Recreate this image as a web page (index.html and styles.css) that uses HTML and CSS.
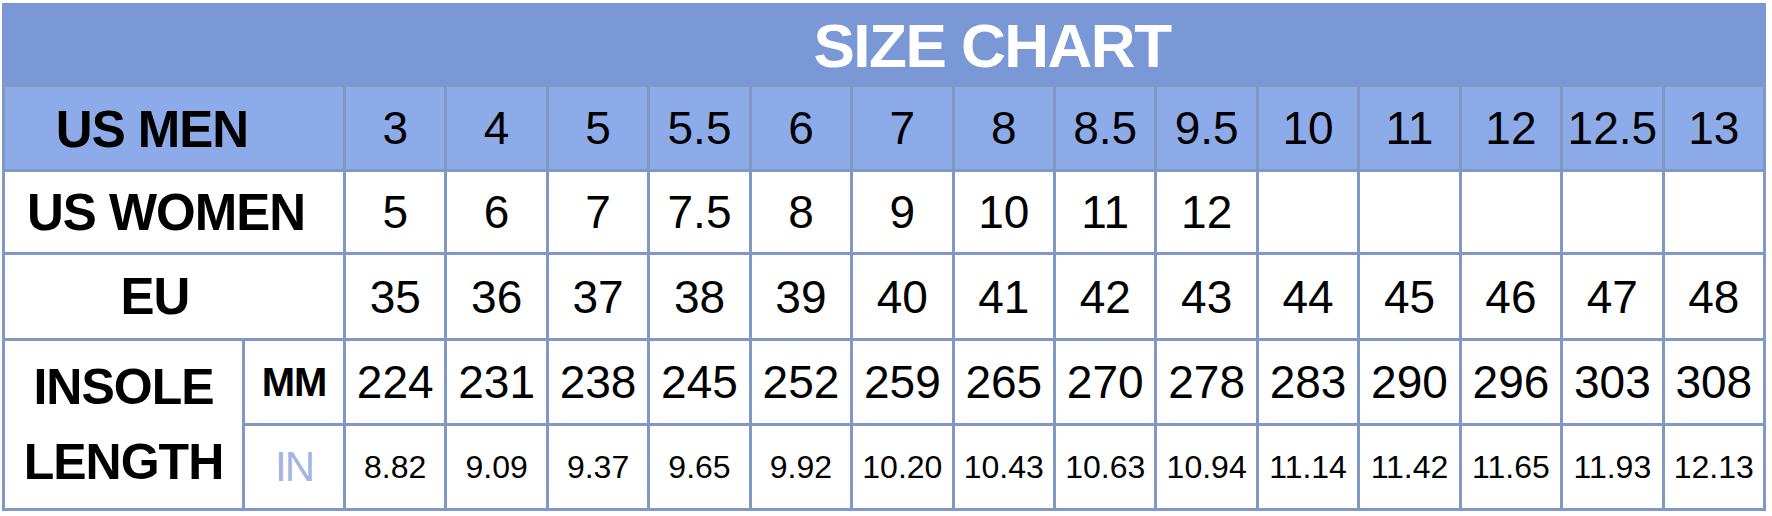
FILE: index.html
```html
<!DOCTYPE html>
<html lang="en">
<head>
<meta charset="utf-8">
<title>Size Chart</title>
<link rel="stylesheet" href="styles.css">
</head>
<body>
<div class="chart">
  <div class="title">SIZE CHART</div>

  <div class="cell label head span2 label-men">US MEN</div>
  <div class="cell num head">3</div>
  <div class="cell num head">4</div>
  <div class="cell num head">5</div>
  <div class="cell num head">5.5</div>
  <div class="cell num head">6</div>
  <div class="cell num head">7</div>
  <div class="cell num head">8</div>
  <div class="cell num head">8.5</div>
  <div class="cell num head">9.5</div>
  <div class="cell num head">10</div>
  <div class="cell num head">11</div>
  <div class="cell num head">12</div>
  <div class="cell num head">12.5</div>
  <div class="cell num head">13</div>

  <div class="cell label span2 label-women">US WOMEN</div>
  <div class="cell num">5</div>
  <div class="cell num">6</div>
  <div class="cell num">7</div>
  <div class="cell num">7.5</div>
  <div class="cell num">8</div>
  <div class="cell num">9</div>
  <div class="cell num">10</div>
  <div class="cell num">11</div>
  <div class="cell num">12</div>
  <div class="cell num"></div>
  <div class="cell num"></div>
  <div class="cell num"></div>
  <div class="cell num"></div>
  <div class="cell num"></div>

  <div class="cell label span2 label-eu">EU</div>
  <div class="cell num">35</div>
  <div class="cell num">36</div>
  <div class="cell num">37</div>
  <div class="cell num">38</div>
  <div class="cell num">39</div>
  <div class="cell num">40</div>
  <div class="cell num">41</div>
  <div class="cell num">42</div>
  <div class="cell num">43</div>
  <div class="cell num">44</div>
  <div class="cell num">45</div>
  <div class="cell num">46</div>
  <div class="cell num">47</div>
  <div class="cell num">48</div>

  <div class="cell insole">INSOLE<br>LENGTH</div>
  <div class="cell unit">MM</div>
  <div class="cell num">224</div>
  <div class="cell num">231</div>
  <div class="cell num">238</div>
  <div class="cell num">245</div>
  <div class="cell num">252</div>
  <div class="cell num">259</div>
  <div class="cell num">265</div>
  <div class="cell num">270</div>
  <div class="cell num">278</div>
  <div class="cell num">283</div>
  <div class="cell num">290</div>
  <div class="cell num">296</div>
  <div class="cell num">303</div>
  <div class="cell num">308</div>

  <div class="cell unit unit-in">IN</div>
  <div class="cell num small">8.82</div>
  <div class="cell num small">9.09</div>
  <div class="cell num small">9.37</div>
  <div class="cell num small">9.65</div>
  <div class="cell num small">9.92</div>
  <div class="cell num small">10.20</div>
  <div class="cell num small">10.43</div>
  <div class="cell num small">10.63</div>
  <div class="cell num small">10.94</div>
  <div class="cell num small">11.14</div>
  <div class="cell num small">11.42</div>
  <div class="cell num small">11.65</div>
  <div class="cell num small">11.93</div>
  <div class="cell num small">12.13</div>
</div>
</body>
</html>
```

FILE: styles.css
```css
html, body {
  margin: 0;
  padding: 0;
  background: #ffffff;
}

body {
  padding: 3px 0 0 2px;
  font-family: "Liberation Sans", Arial, sans-serif;
  color: #000;
}

.chart {
  width: 1764px;
  box-sizing: border-box;
  padding: 3px;
  background: #7f99c4;
  display: grid;
  grid-template-columns: 237px 98px repeat(14, 1fr);
  grid-template-rows: 78px 82px 80px 83px 82px 82px;
  gap: 3px;
}

.title {
  grid-column: 1 / -1;
  background: #7a98d6;
  color: #ffffff;
  font-weight: bold;
  font-size: 62px;
  letter-spacing: -1.5px;
  display: flex;
  align-items: center;
  justify-content: center;
  padding-left: 216px;
  margin: -3px -3px 0 -3px;
  padding-top: 3px;
}

.cell {
  background: #ffffff;
  display: flex;
  align-items: center;
  justify-content: center;
  white-space: nowrap;
}

.head {
  background: #8eabe9;
}

.span2 {
  grid-column: span 2;
}

.label {
  font-weight: bold;
  font-size: 51px;
  letter-spacing: -1px;
}

.label-men {
  padding-right: 44px;
  padding-top: 2px;
}

.label-women {
  padding-right: 16px;
}

.label-eu {
  padding-right: 38px;
}

.num {
  font-size: 46px;
}

.num.small {
  font-size: 32px;
}

.insole {
  grid-row: span 2;
  font-weight: bold;
  font-size: 50px;
  letter-spacing: -1px;
  line-height: 75px;
  text-align: center;
}

.unit {
  font-weight: bold;
  font-size: 40px;
  letter-spacing: -1px;
}

.unit-in {
  font-weight: normal;
  font-size: 42px;
  letter-spacing: -2px;
  color: #9fb6e0;
}
```
